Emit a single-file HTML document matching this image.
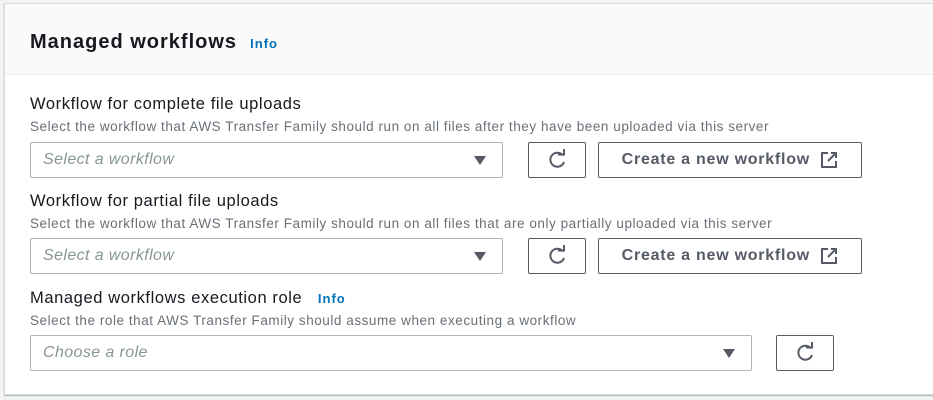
<!DOCTYPE html>
<html><head><style>
*{box-sizing:border-box;margin:0;padding:0}
body{width:933px;height:400px;background:#f2f3f3;font-family:"Liberation Sans",sans-serif;position:relative;overflow:hidden}
.panel{position:absolute;left:4px;top:3px;width:940px;height:392px;background:#fff;border:1px solid #d5dbdb;box-shadow:0 1px 1px rgba(0,28,36,.3)}
.hdr{position:absolute;left:0;top:0;right:0;height:71px;background:#fafafa;border-bottom:1px solid #eaeded}
.t{position:absolute;font-size:20px;letter-spacing:1px;font-weight:bold;color:#16191f;left:25px;top:27px;white-space:nowrap}
.info{color:#0073bb;font-size:13px;font-weight:bold;letter-spacing:1px}
.a{position:absolute;left:30px;white-space:nowrap}
.lab{font-size:16.5px;letter-spacing:0.6px;color:#16191f}
.desc{font-size:13.5px;letter-spacing:0.55px;color:#687078}
.sel{position:absolute;height:36px;border:1px solid #aab7b8;border-radius:2px;font-style:italic;color:#879596;font-size:16px;letter-spacing:0.4px;padding:8px 12px}
.sel:after{content:"";position:absolute;right:16px;top:13px;border-left:6px solid transparent;border-right:6px solid transparent;border-top:9px solid #545b64}
.btn{position:absolute;height:36px;border:1px solid #545b64;border-radius:2px;color:#545b64;font-weight:bold;font-size:16px;letter-spacing:0.75px;display:flex;align-items:center;justify-content:center}
</style></head><body>
<div class="panel"><div class="hdr"></div><div class="t">Managed workflows&nbsp;&nbsp;<span class="info">Info</span></div></div>

<div class="a lab" style="top:95px">Workflow for complete file uploads</div>
<div class="a desc" style="top:119px">Select the workflow that AWS Transfer Family should run on all files after they have been uploaded via this server</div>
<div class="sel" style="left:30px;top:142px;width:473px">Select a workflow</div>
<div class="btn" style="left:528px;top:142px;width:58px"><svg width="22" height="22" viewBox="0 0 22 22"><path d="M17 6.5A7 7 0 1 0 18 13" fill="none" stroke="#545b64" stroke-width="2"/><path d="M12 5.5h6V0" fill="none" stroke="#545b64" stroke-width="2"/></svg></div>
<div class="btn" style="left:598px;top:142px;width:264px">Create a new workflow&nbsp;&nbsp;<svg width="18" height="18" viewBox="0 0 18 18"><path d="M8 2H2v14h14v-6M11 2h5v5M16 2L8 10" fill="none" stroke="#545b64" stroke-width="2"/></svg></div>

<div class="a lab" style="top:192px">Workflow for partial file uploads</div>
<div class="a desc" style="top:216px">Select the workflow that AWS Transfer Family should run on all files that are only partially uploaded via this server</div>
<div class="sel" style="left:30px;top:238px;width:473px">Select a workflow</div>
<div class="btn" style="left:528px;top:238px;width:58px"><svg width="22" height="22" viewBox="0 0 22 22"><path d="M17 6.5A7 7 0 1 0 18 13" fill="none" stroke="#545b64" stroke-width="2"/><path d="M12 5.5h6V0" fill="none" stroke="#545b64" stroke-width="2"/></svg></div>
<div class="btn" style="left:598px;top:238px;width:264px">Create a new workflow&nbsp;&nbsp;<svg width="18" height="18" viewBox="0 0 18 18"><path d="M8 2H2v14h14v-6M11 2h5v5M16 2L8 10" fill="none" stroke="#545b64" stroke-width="2"/></svg></div>

<div class="a lab" style="top:289px">Managed workflows execution role&nbsp;&nbsp;&nbsp;<span class="info">Info</span></div>
<div class="a desc" style="top:313px">Select the role that AWS Transfer Family should assume when executing a workflow</div>
<div class="sel" style="left:30px;top:335px;width:722px">Choose a role</div>
<div class="btn" style="left:776px;top:335px;width:58px"><svg width="22" height="22" viewBox="0 0 22 22"><path d="M17 6.5A7 7 0 1 0 18 13" fill="none" stroke="#545b64" stroke-width="2"/><path d="M12 5.5h6V0" fill="none" stroke="#545b64" stroke-width="2"/></svg></div>
</body></html>
